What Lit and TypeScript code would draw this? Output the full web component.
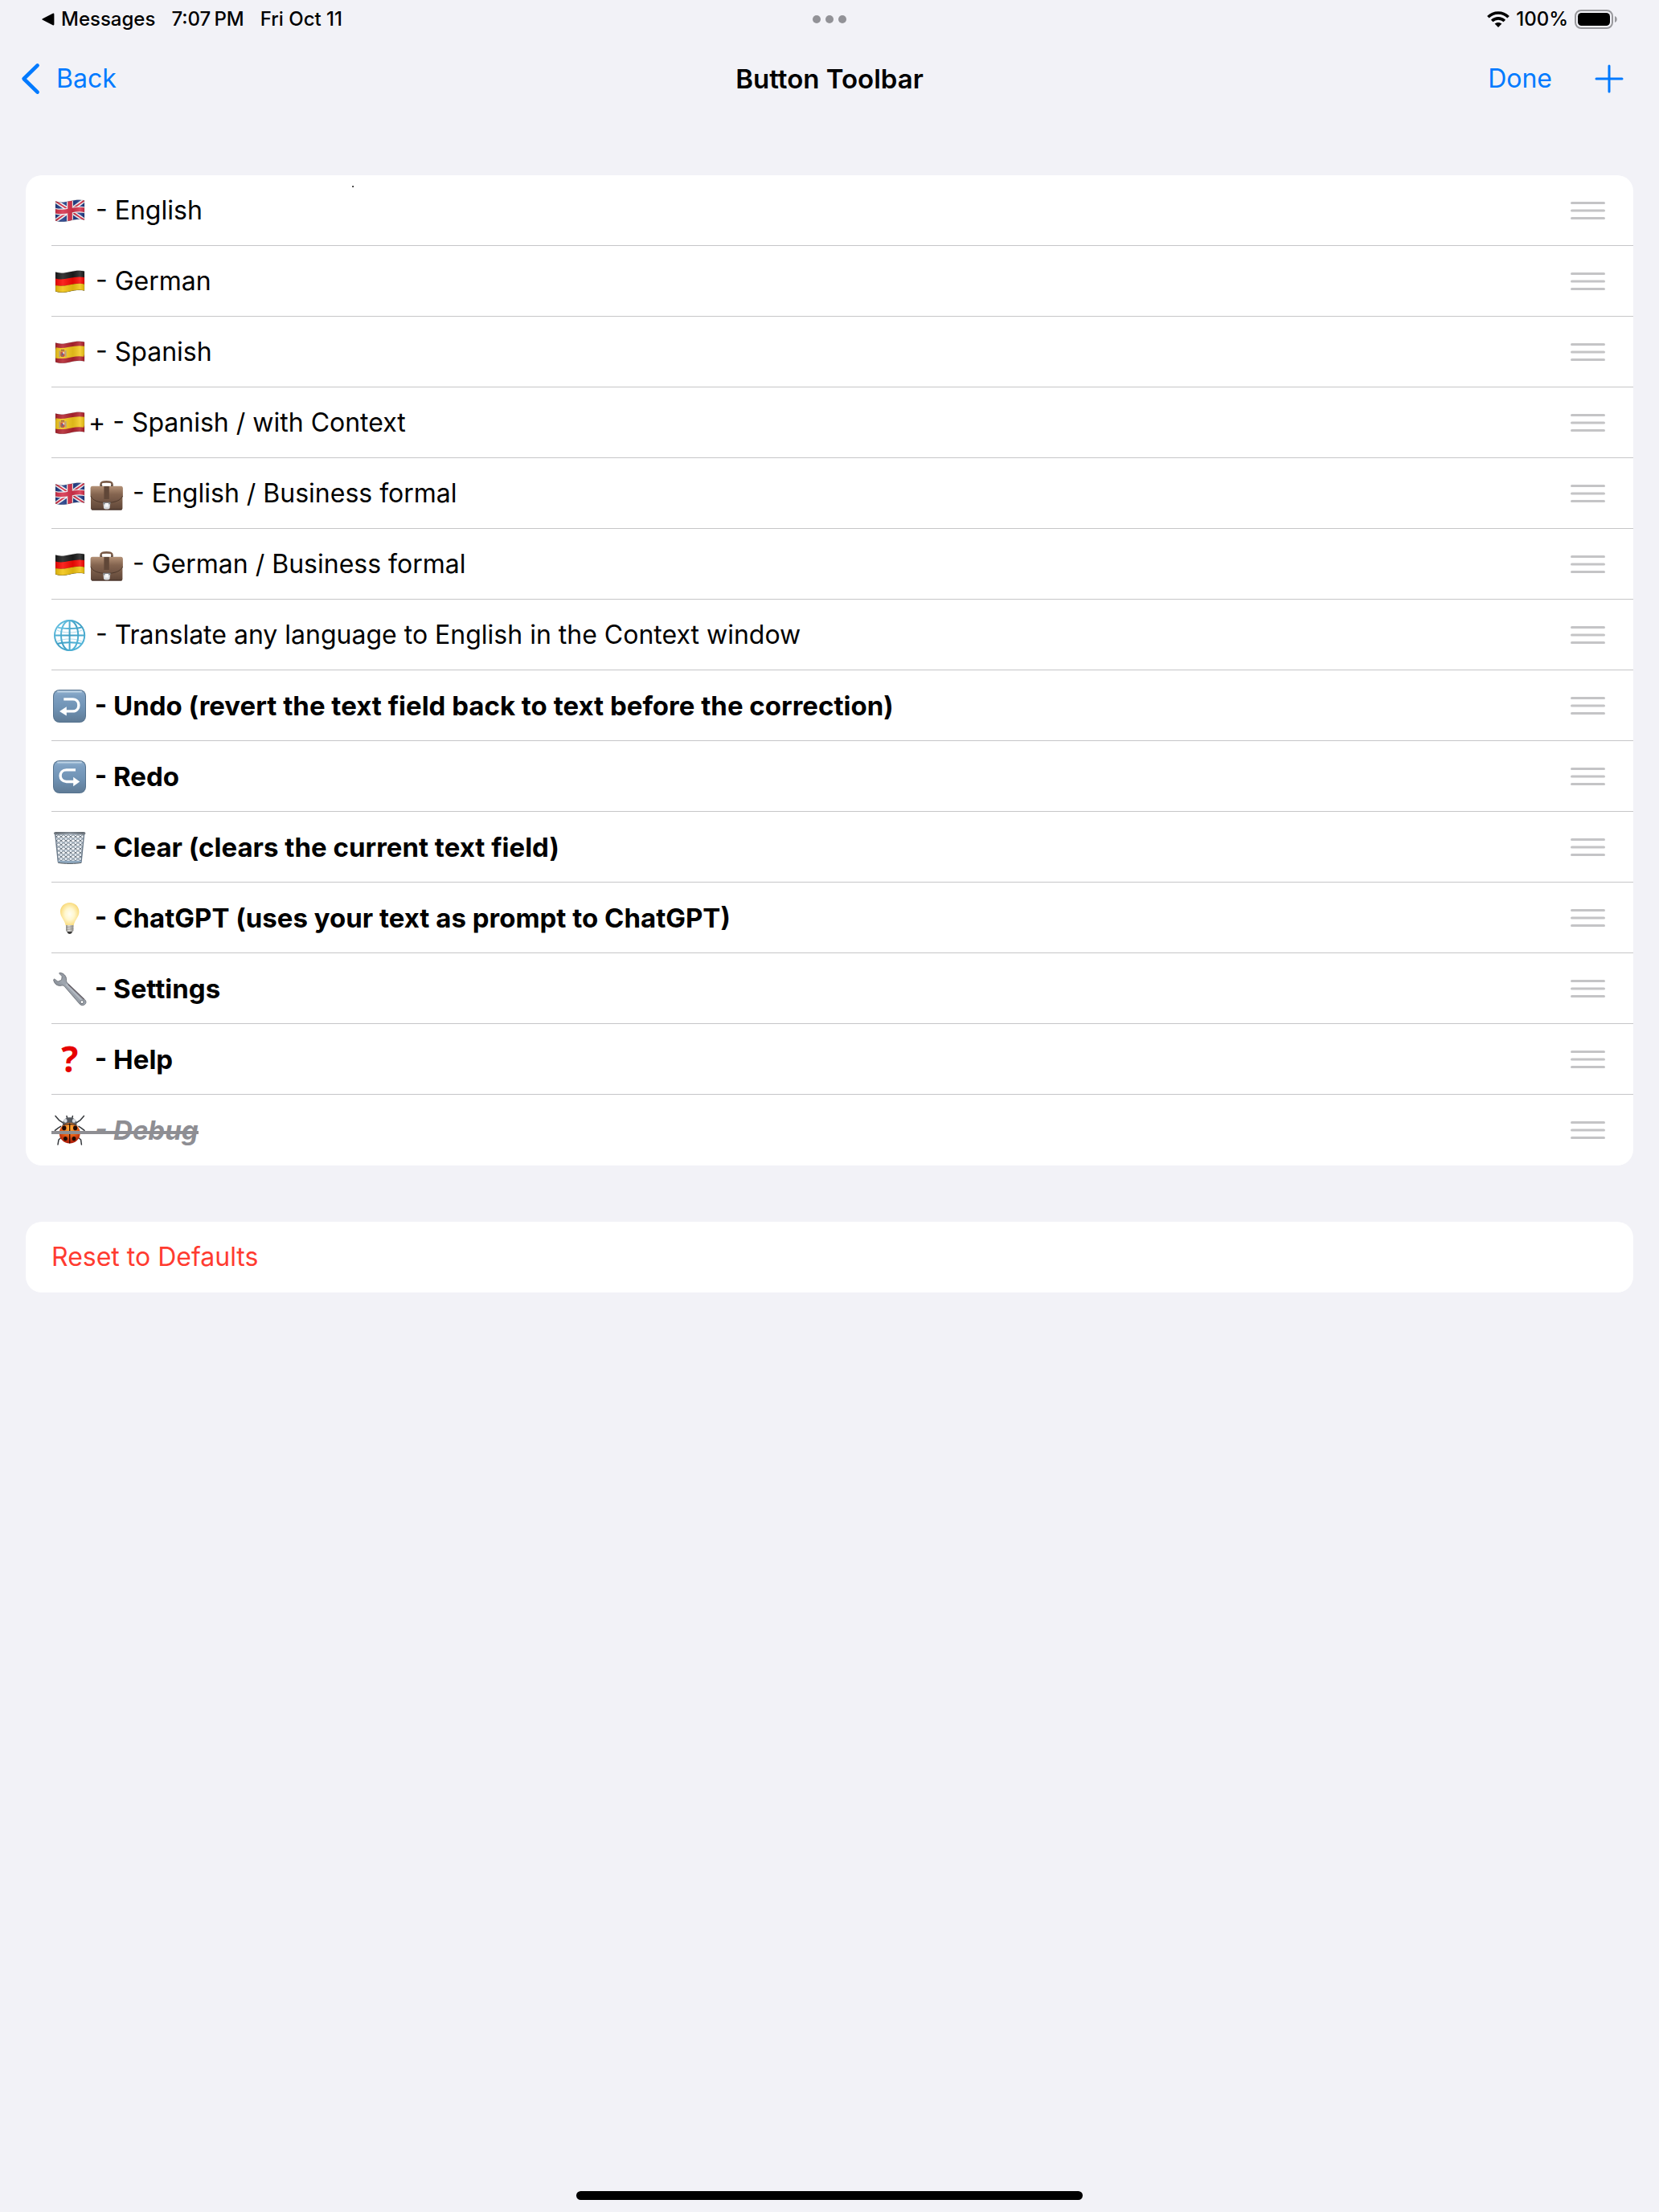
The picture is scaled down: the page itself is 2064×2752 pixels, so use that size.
import { LitElement, html, css, svg } from "lit";
import { customElement, property } from "lit/decorators.js";
import { classMap } from "lit/directives/class-map.js";

type IconName =
  | "uk" | "de" | "es" | "briefcase" | "globe" | "undo" | "redo"
  | "trash" | "bulb" | "wrench" | "question" | "bug";

interface ToolbarItem {
  icons: IconName[];
  text: string;
  builtIn?: boolean;
  disabled?: boolean;
}

const ITEMS: ToolbarItem[] = [
  { icons: ["uk"], text: " - English" },
  { icons: ["de"], text: " - German" },
  { icons: ["es"], text: " - Spanish" },
  { icons: ["es"], text: "+ - Spanish / with Context" },
  { icons: ["uk", "briefcase"], text: " - English / Business formal" },
  { icons: ["de", "briefcase"], text: " - German / Business formal" },
  { icons: ["globe"], text: " - Translate any language to English in the Context window" },
  { icons: ["undo"], text: " - Undo (revert the text field back to text before the correction)", builtIn: true },
  { icons: ["redo"], text: " - Redo", builtIn: true },
  { icons: ["trash"], text: " - Clear (clears the current text field)", builtIn: true },
  { icons: ["bulb"], text: " - ChatGPT (uses your text as prompt to ChatGPT)", builtIn: true },
  { icons: ["wrench"], text: " - Settings", builtIn: true },
  { icons: ["question"], text: " - Help", builtIn: true },
  { icons: ["bug"], text: " - Debug", builtIn: true, disabled: true },
];

/* The cloth outline shared by all flags. */
const FLAG = "M5 11.6C11 13.6 17 12.6 23 11.2S36 8.8 41 10.6V34.6C36 33 29 34 23 35.4S10 37.4 5 35.4Z";
const wave = (y: number) => `M4 ${y}C11 ${y + 2} 17 ${y + 1} 23 ${y - 0.4}S36 ${y - 2.8} 42 ${y - 1}`;

const flag = (content: unknown) => svg`
  <defs>
    <clipPath id="cloth"><path d=${FLAG} /></clipPath>
    <linearGradient id="sheen" x1="0" x2="1" y1="0" y2="0">
      <stop offset="0" stop-color="#000" stop-opacity=".12" />
      <stop offset=".25" stop-color="#fff" stop-opacity=".12" />
      <stop offset=".6" stop-color="#000" stop-opacity=".1" />
      <stop offset=".85" stop-color="#fff" stop-opacity=".14" />
      <stop offset="1" stop-color="#000" stop-opacity=".1" />
    </linearGradient>
  </defs>
  <g clip-path="url(#cloth)">${content}<path d=${FLAG} fill="url(#sheen)" /></g>
  <path d=${FLAG} fill="none" stroke="#000" stroke-opacity=".18" stroke-width=".8" />`;

const keycap = (arrow: unknown) => svg`
  <defs>
    <linearGradient id="key" x1="0" x2="0" y1="0" y2="1">
      <stop offset="0" stop-color="#8fb0cf" />
      <stop offset=".18" stop-color="#7d9fc1" />
      <stop offset=".55" stop-color="#7093b5" />
      <stop offset="1" stop-color="#5f7b96" />
    </linearGradient>
  </defs>
  <rect x="2" y="3" width="41" height="41" rx="8" fill="#55728e" />
  <rect x="3" y="4" width="39" height="39" rx="7" fill="url(#key)" />
  <path d="M8 5.4H37" stroke="#c9dbea" stroke-width="2" stroke-linecap="round" opacity=".8" />
  ${arrow}`;

const ICONS: Record<IconName, () => unknown> = {
  uk: () => flag(svg`
    <rect x="4" y="7" width="38" height="32" fill="#1f3b86" />
    <path d="M4 10.6L42 35.6M4 36.4L42 9.6" stroke="#f4f4f6" stroke-width="5" />
    <path d="M4 10.6L42 35.6M4 36.4L42 9.6" stroke="#d0233c" stroke-width="1.8" />
    <path d=${wave(23.5)} fill="none" stroke="#f4f4f6" stroke-width="7.8" />
    <path d="M23 7V39" stroke="#f4f4f6" stroke-width="8" />
    <path d=${wave(23.5)} fill="none" stroke="#d8324c" stroke-width="5.4" />
    <path d="M23 7V39" stroke="#d8324c" stroke-width="5.6" />`),
  de: () => flag(svg`
    <rect x="4" y="7" width="38" height="32" fill="#1d1d1d" />
    <path d=${wave(23.6)} fill="none" stroke="#fa0a04" stroke-width="8.4" />
    <path d=${wave(32.8)} fill="none" stroke="#f2c410" stroke-width="10" />`),
  es: () => flag(svg`
    <rect x="4" y="7" width="38" height="32" fill="#b3242f" />
    <path d=${wave(23.6)} fill="none" stroke="#f5ca1c" stroke-width="13" />
    <rect x="9.4" y="21.4" width="1.6" height="8" fill="#b9a27a" />
    <rect x="17" y="21" width="1.6" height="8" fill="#b9a27a" />
    <path d="M11.4 22.6H16.6V27C16.6 30 11.4 30 11.4 27Z" fill="#c23b36" />
    <path d="M14 22.8H16.4V25.6H14Z" fill="#e6c9b8" />
    <path d="M11.6 25.6H14V29H13C12 28.6 11.6 28 11.6 27Z" fill="#8d5a48" />
    <circle cx="14" cy="25.6" r="1" fill="#35508f" />
    <path d="M11.6 21.8L12 19.8H16L16.4 21.8Z" fill="#a35a2e" />`),
  briefcase: () => svg`
    <defs>
      <linearGradient id="hide" x1="0" x2="0" y1="0" y2="1">
        <stop offset="0" stop-color="#b08d72" />
        <stop offset=".35" stop-color="#8a6a54" />
        <stop offset="1" stop-color="#5d4436" />
      </linearGradient>
      <linearGradient id="flap" x1="0" x2="0" y1="0" y2="1">
        <stop offset="0" stop-color="#b39176" />
        <stop offset=".5" stop-color="#84644f" />
        <stop offset="1" stop-color="#6e5242" />
      </linearGradient>
    </defs>
    <path d="M15.5 14V11.6C15.5 8.6 18 8.4 22.5 8.4S29.5 8.6 29.5 11.6V14" fill="none" stroke="#7a5c49" stroke-width="2.6" />
    <path d="M15 13.4H17.2M28 13.4H30.2" stroke="#4a4442" stroke-width="2" />
    <rect x="3" y="14" width="39.4" height="29.6" rx="2.4" fill="url(#hide)" />
    <path d="M2.6 16.4C2.6 14.6 3.6 13.8 5 13.8H40.4C42 13.8 42.8 14.6 42.8 16.4V26C40 31.6 33 34.4 22.7 34.4S5 31.6 2.6 26Z" fill="url(#flap)" />
    <path d="M2.8 26C5 31.6 12.4 34.4 22.7 34.4S40.4 31.6 42.6 26" fill="none" stroke="#4b3529" stroke-width=".9" />
    <rect x="19.4" y="14" width="6.4" height="16" fill="#604738" />
    <path d="M4 42.8H41.6" stroke="#46332a" stroke-width="1.2" />
    <path d="M18.4 34.6H27.2L26.6 41C26 43 19.4 43 19 41Z" fill="#d8dadd" />
    <path d="M18.2 33.8H27.4V36.4H18.2Z" fill="#85868a" />
    <path d="M20.6 35H25V39.6H20.6Z" fill="#f7f7f8" />`,
  globe: () => svg`
    <defs>
      <linearGradient id="sea" x1="0" x2="1" y1="0" y2="1">
        <stop offset="0" stop-color="#6cc6e6" />
        <stop offset=".5" stop-color="#3f9fc4" />
        <stop offset="1" stop-color="#57b9dc" />
      </linearGradient>
    </defs>
    <circle cx="22.6" cy="23.5" r="18.4" fill="#fafdff" />
    <g fill="none" stroke="#b4dcec" stroke-width="1">
      <path d="M7 17C15 21 30 21 38 17M7 31C15 27 30 27 38 31" />
    </g>
    <g fill="none" stroke="url(#sea)" stroke-width="2">
      <circle cx="22.6" cy="23.5" r="18.6" />
      <ellipse cx="22.6" cy="23.5" rx="10.6" ry="18.6" />
      <path d="M22.4 5H22.8V42H22.4ZM4 23.3H41V23.7H4Z" stroke-width="1.6" />
      <path d="M7.4 13.4C15 15.6 30 15.6 37.8 13.4M7.4 34C15 31.6 30 31.6 37.8 34" />
    </g>`,
  undo: () => keycap(svg`
    <path d="M15.3 14.9H26.4C36.4 14.9 36.4 29.9 26.4 29.9H17" fill="none" stroke="#fff" stroke-width="3.4" />
    <path d="M10 29.9L18.8 24.2V35.6Z" fill="#fff" />`),
  redo: () => keycap(svg`
    <path d="M30 14.9H18.6C8.6 14.9 8.6 29.5 18.6 29.5H28" fill="none" stroke="#fff" stroke-width="3.4" />
    <path d="M35.2 29.5L27.2 23.8V35.2Z" fill="#fff" />`),
  trash: () => svg`
    <defs>
      <clipPath id="basket"><path d="M4.6 7H40.6L37.4 41.6H8.2Z" /></clipPath>
      <pattern id="mesh" width="6" height="5" patternUnits="userSpaceOnUse">
        <path d="M0 0L6 5M6 0L0 5" stroke="#66727e" stroke-width="1" />
        <path d="M0 2.5H6" stroke="#9fb6ca" stroke-width=".5" />
      </pattern>
      <linearGradient id="rim" x1="0" x2="1" y1="0" y2="0">
        <stop offset="0" stop-color="#6d747c" />
        <stop offset=".5" stop-color="#a2abb5" />
        <stop offset="1" stop-color="#6d747c" />
      </linearGradient>
    </defs>
    <g clip-path="url(#basket)">
      <rect x="4" y="6" width="38" height="37" fill="#f1f4f7" />
      <rect x="4" y="6" width="38" height="37" fill="url(#mesh)" />
    </g>
    <path d="M4.8 7L8.4 41.6M40.6 7L37 41.6" stroke="#6b7a8a" stroke-width="1.4" />
    <path d="M8.2 39.8H37.4V42C33 43.6 12.6 43.6 8.2 42Z" fill="#8fa9c0" />
    <path d="M8.2 42.2C14 43.8 32 43.8 37.4 42.2" fill="none" stroke="#4c5358" stroke-width="1" />
    <rect x="3" y="4" width="39.4" height="3.6" rx="1.8" fill="url(#rim)" />
    <path d="M5 5H40" stroke="#4f555c" stroke-width=".8" />`,
  bulb: () => svg`
    <defs>
      <radialGradient id="glow" cx=".5" cy=".5" r=".55">
        <stop offset="0" stop-color="#fffef4" />
        <stop offset=".45" stop-color="#fff7cf" />
        <stop offset=".85" stop-color="#fbe08a" />
        <stop offset="1" stop-color="#efcf6c" />
      </radialGradient>
      <linearGradient id="base" x1="0" x2="1" y1="0" y2="0">
        <stop offset="0" stop-color="#8b8a86" />
        <stop offset=".4" stop-color="#e2e1de" />
        <stop offset="1" stop-color="#8b8a86" />
      </linearGradient>
    </defs>
    <path d="M22.7 4C29.4 4 34.4 9 34.4 15.4C34.4 22 29 25 27.6 32.6H17.8C16.4 25 11 22 11 15.4C11 9 16 4 22.7 4Z" fill="url(#glow)" />
    <path d="M18 32H27.4V38.4C27.4 39.8 26 40.6 22.7 40.6S18 39.8 18 38.4Z" fill="url(#base)" />
    <path d="M18 34.6L27.4 33.8M18 37.4L27.4 36.6" stroke="#8f8d88" stroke-width=".8" />
    <path d="M19.4 40H26C25.6 42 24.4 43 22.7 43S19.8 42 19.4 40Z" fill="#3c3b3a" />`,
  wrench: () => svg`
    <defs>
      <linearGradient id="steel" x1="0" x2="1" y1="1" y2="0">
        <stop offset="0" stop-color="#4f545c" />
        <stop offset=".5" stop-color="#a0a7b0" />
        <stop offset="1" stop-color="#666b73" />
      </linearGradient>
    </defs>
    <path d="M10.2 3.2C15.4 3.4 19 7.6 18.6 12.4C18.5 13.8 19 15 20 16.1L41.4 36.6C43.6 38.6 43.4 41 41.6 42.6C39.6 44.4 36.8 44 35 42L16.4 20.4C15.2 19.2 13.8 18.8 12.2 19.2C7.4 20.2 3.2 17 2.6 11.8L3.8 10.9L8 14.2L12.6 12.2L13.2 7.6L9.6 4.2Z" fill="url(#steel)" stroke="#565a61" stroke-width=".7" />
    <path d="M18 17.4L37.4 37" stroke="#d5d9df" stroke-width="1.4" opacity=".5" />
    <path d="M21 17.6L40.6 36.4" stroke="#5a4e55" stroke-width="1.2" opacity=".8" />
    <circle cx="38" cy="39.6" r="2" fill="#fff" stroke="#565a61" stroke-width=".8" />`,
  question: () => svg`<text class="mark" x="22.7" y="39" text-anchor="middle">?</text>`,
  bug: () => svg`
    <defs>
      <radialGradient id="shell" cx=".5" cy=".25" r=".75">
        <stop offset="0" stop-color="#ffb43a" />
        <stop offset=".45" stop-color="#ee6a1c" />
        <stop offset="1" stop-color="#a81505" />
      </radialGradient>
    </defs>
    <g fill="none" stroke="#34373b" stroke-width="1.5" stroke-linecap="round" stroke-linejoin="round">
      <path d="M14 13.6L9.4 10.6L5 5.4M31.4 13.6L36 10.6L40.4 5.4" />
      <path d="M11.6 18.4L8.4 20.4L4.4 23.4M34 18.4L37 20.4L41 23.4" />
      <path d="M12.4 32L9 35L8 41M33 32L36.6 35L37.4 41" />
      <path d="M19.6 8.4L19 5.4M25.8 8.4L26.4 5.4" />
    </g>
    <path d="M13.8 16.4C13.8 9.8 18 7.2 22.7 7.2S31.6 9.8 31.6 16.4Z" fill="#54585e" />
    <ellipse cx="17.4" cy="11.4" rx="2.2" ry="2.4" fill="#d9dde2" />
    <ellipse cx="28" cy="11.4" rx="2.2" ry="2.4" fill="#d9dde2" />
    <ellipse cx="22.7" cy="26.8" rx="13" ry="12.8" fill="url(#shell)" />
    <path d="M12.6 18C15 14 30.4 14 32.8 18C29 15.8 16.4 15.8 12.6 18Z" fill="#2c2c2e" />
    <path d="M22.7 14.6V39.6" stroke="#2a0d05" stroke-width="1.3" />
    <g fill="#1d0a05">
      <ellipse cx="15.8" cy="20.4" rx="2.6" ry="2.8" />
      <ellipse cx="29.6" cy="20.4" rx="2.6" ry="2.8" />
      <ellipse cx="17.4" cy="33.6" rx="2.4" ry="2.6" />
      <ellipse cx="28" cy="33.6" rx="2.4" ry="2.6" />
    </g>`,
};

@customElement("emoji-icon")
export class EmojiIcon extends LitElement {
  static styles = css`
    :host {
      display: block;
      flex: none;
    }
    .icon {
      display: block;
      width: 46px;
      height: 45px;
      overflow: visible;
    }
    .mark {
      font: normal 700 44px "Noto Sans", sans-serif;
      fill: #e60000;
    }
  `;

  @property() name: IconName = "uk";

  render() {
    return html`<svg class="icon" viewBox="0 0 46 45" aria-hidden="true">${ICONS[this.name]()}</svg>`;
  }
}

@customElement("app-root")
export class AppRoot extends LitElement {
  static styles = css`
    :host {
      display: flex;
      flex-direction: column;
      min-height: 100vh;
      background: #f2f2f7;
      color: #000;
      font-family: Inter, "Liberation Sans", sans-serif;
      font-size: 32px;
      line-height: 44px;
    }
    svg {
      display: block;
      flex: none;
    }
    button,
    a {
      font: inherit;
      color: #007aff;
      background: none;
      border: 0;
      padding: 0;
      margin: 0;
      text-decoration: none;
      cursor: pointer;
    }
    .status,
    .nav {
      display: grid;
      grid-template-columns: 1fr auto 1fr;
      align-items: center;
    }
    .status {
      height: 48px;
      padding: 0 52px;
      font-size: 24px;
      line-height: 32px;
      font-weight: 500;
    }
    .status-left,
    .status-right,
    .return,
    .nav-left,
    .nav-right {
      display: flex;
      align-items: center;
    }
    .status-left {
      gap: 20px;
    }
    .return {
      gap: 8px;
      color: #000;
    }
    .status-right,
    .nav-right {
      justify-content: flex-end;
    }
    .status-right {
      gap: 8px;
    }
    .dots {
      display: flex;
      gap: 6px;
    }
    .dot {
      width: 10px;
      height: 10px;
      border-radius: 50%;
      background: #929297;
    }
    .nav {
      height: 100px;
      padding: 0 44px 0 26px;
    }
    .nav-left {
      gap: 20px;
    }
    .nav-right {
      gap: 53px;
    }
    .title {
      margin: 0;
      padding-left: 18px;
      font-size: 33px;
      line-height: 44px;
      font-weight: 600;
    }
    .content {
      display: flex;
      flex-direction: column;
      gap: 70px;
      padding: 70px 32px;
    }
    .card {
      position: relative;
      margin: 0;
      padding: 0;
      list-style: none;
      background: #fff;
      border-radius: 20px;
    }
    .row {
      display: flex;
      align-items: center;
      justify-content: space-between;
      box-sizing: border-box;
      min-height: 88px;
      margin-left: 32px;
      padding-right: 35px;
      border-bottom: 1px solid #c6c6c8;
    }
    .row:last-child {
      border-bottom-color: transparent;
    }
    .label {
      display: flex;
      align-items: center;
      position: relative;
      white-space: pre;
    }
    .built-in {
      font-size: 33px;
      font-weight: 700;
    }
    .disabled {
      color: #8e8e93;
      font-style: italic;
      text-decoration: none;
    }
    .disabled::after {
      content: "";
      position: absolute;
      left: 0;
      right: 0;
      top: 24px;
      height: 4px;
      background: #8e8e93;
    }
    .card:first-child::after {
      content: "";
      position: absolute;
      left: 406px;
      top: 13px;
      width: 2px;
      height: 2px;
      background: linear-gradient(135deg, #999, #000);
    }
    .reset {
      display: block;
      width: 100%;
      min-height: 88px;
      padding: 0 32px;
      text-align: left;
      color: #ff3b30;
    }
    .home {
      width: 630px;
      height: 11px;
      margin: auto auto 15px;
      border-radius: 6px;
      background: #000;
    }
  `;

  private row(item: ToolbarItem) {
    const body = html`${item.icons.map((n) => html`<emoji-icon .name=${n}></emoji-icon>`)}<span>${item.text}</span>`;
    const classes = classMap({ label: true, "built-in": !!item.builtIn, disabled: !!item.disabled });
    return html`<li class="row">
      ${item.disabled ? html`<s class=${classes}>${body}</s>` : html`<span class=${classes}>${body}</span>`}
      <button type="button" aria-label=${"Reorder" + item.text}>
        <svg width="43" height="23" viewBox="0 0 43 23" fill="#c4c4c6" aria-hidden="true">
          <rect y="1" width="43" height="3" rx="1.5" />
          <rect y="10.5" width="43" height="3" rx="1.5" />
          <rect y="20" width="43" height="3" rx="1.5" />
        </svg>
      </button>
    </li>`;
  }

  render() {
    return html`
      <div class="status">
        <div class="status-left">
          <a class="return" href="#messages">
            <svg width="16" height="16" viewBox="0 0 16 16" aria-hidden="true">
              <path d="M1 7.2L13.6 .8Q15.4 0 15.4 2V14Q15.4 16 13.6 15.2L1 8.8Q-.4 8 1 7.2Z" />
            </svg>
            <span>Messages</span>
          </a>
          <span>7:07&#8201;PM</span>
          <span>Fri Oct 11</span>
        </div>
        <div class="dots"><span class="dot"></span><span class="dot"></span><span class="dot"></span></div>
        <div class="status-right">
          <svg width="28" height="20" viewBox="0 0 28 20" aria-hidden="true">
            <g fill="none" stroke="#000" stroke-width="3.6">
              <path d="M1.4 7.2C8.4 .2 19.6 .2 26.6 7.2" />
              <path d="M6.2 12C10.6 7.8 17.4 7.8 21.8 12" />
            </g>
            <path d="M9.6 15.6C12 13.4 16 13.4 18.4 15.6L14 20Z" />
          </svg>
          <span>100%</span>
          <svg width="53" height="24" viewBox="0 0 53 24" aria-hidden="true">
            <rect x="1" y="1" width="46" height="22" rx="7" fill="none" stroke="#98989c" stroke-width="2" />
            <rect x="4" y="4" width="40" height="16" rx="4.6" />
            <path d="M50 8C53.6 9.2 53.6 14.8 50 16Z" fill="#98989c" />
          </svg>
        </div>
      </div>
      <header class="nav">
        <div class="nav-left">
          <a class="nav-left" href="#back">
            <svg width="24" height="40" viewBox="0 0 24 40" aria-hidden="true">
              <path d="M20.6 3.4L3.6 20L20.6 36.6" fill="none" stroke="#007aff" stroke-width="4.6" stroke-linecap="round" stroke-linejoin="round" />
            </svg>
            <span>Back</span>
          </a>
        </div>
        <h1 class="title">Button Toolbar</h1>
        <div class="nav-right">
          <button type="button">Done</button>
          <button type="button" aria-label="Add">
            <svg width="36" height="36" viewBox="0 0 36 36" aria-hidden="true">
              <path d="M18 2V34M2 18H34" stroke="#007aff" stroke-width="3" stroke-linecap="round" />
            </svg>
          </button>
        </div>
      </header>
      <main class="content">
        <ul class="card">
          ${ITEMS.map((item) => this.row(item))}
        </ul>
        <div class="card">
          <button class="reset" type="button">Reset to Defaults</button>
        </div>
      </main>
      <div class="home"></div>
    `;
  }
}
